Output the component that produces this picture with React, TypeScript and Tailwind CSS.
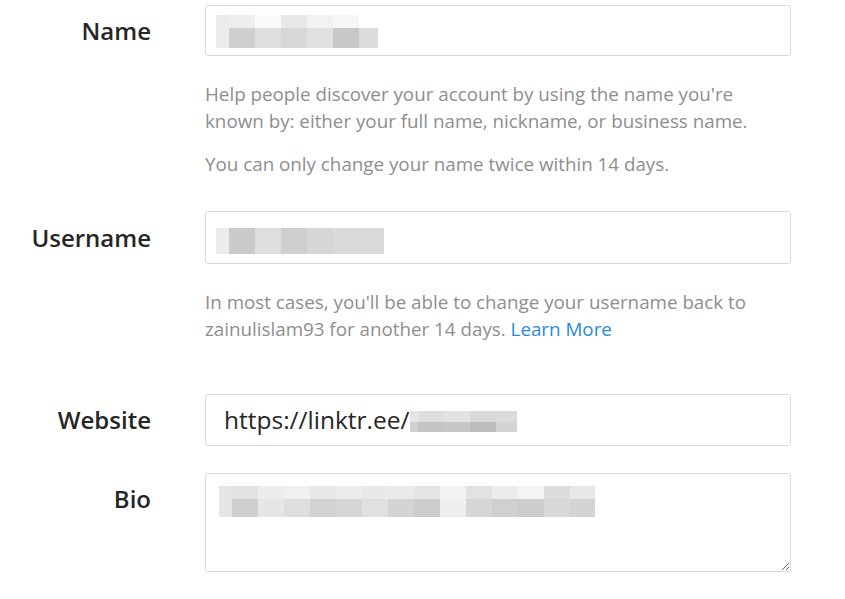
const nameCells = [
  ["#ececec", "#ececec", 13],
  ["#eeeeee", "#cfcfcf", 26],
  ["#fafafa", "#dedede", 26],
  ["#e8e8e8", "#d8d8d8", 26],
  ["#f2f2f2", "#e0e0e0", 26],
  ["#f7f7f7", "#c8c8c8", 26],
  ["#ffffff", "#dcdcdc", 19],
] as const;

const userCells = [
  ["#ececec", "#ececec", 13],
  ["#cbcbcb", "#cbcbcb", 26],
  ["#dedede", "#dedede", 26],
  ["#cfcfcf", "#cfcfcf", 26],
  ["#d6d6d6", "#d6d6d6", 26],
  ["#dadada", "#dadada", 51],
] as const;

const siteCells = [
  ["#e4e4e4", "#d0d0d0", 8],
  ["#dedede", "#c4c4c4", 26],
  ["#e2e2e2", "#c6c6c6", 26],
  ["#d8d8d8", "#bcbcbc", 26],
  ["#dadada", "#d4d4d4", 21],
] as const;

const bioCells = [
  ["#e6e6e6", "#e6e6e6", 13],
  ["#e2e2e2", "#cfcfcf", 26],
  ["#ececec", "#e6e6e6", 26],
  ["#f0f0f0", "#dedede", 26],
  ["#e8e8e8", "#d2d2d2", 26],
  ["#ececec", "#d6d6d6", 26],
  ["#e8e8e8", "#e0e0e0", 26],
  ["#eaeaea", "#d4d4d4", 26],
  ["#e4e4e4", "#cccccc", 26],
  ["#f2f2f2", "#eeeeee", 26],
  ["#e2e2e2", "#d6d6d6", 26],
  ["#ececec", "#d0d0d0", 26],
  ["#f4f4f4", "#cdcdcd", 26],
  ["#dddddd", "#d8d8d8", 26],
  ["#e8e8e8", "#d4d4d4", 25],
] as const;

function Mosaic({
  cells,
  top,
  bottom,
}: {
  cells: readonly (readonly [string, string, number])[];
  top: number;
  bottom: number;
}) {
  return (
    <div className="flex">
      {cells.map(([a, b, w], i) => (
        <div key={i} className="flex flex-col" style={{ width: w }}>
          <div style={{ height: top, background: a }} />
          <div style={{ height: bottom, background: b }} />
        </div>
      ))}
    </div>
  );
}

export default function App() {
  return (
    <div
      className="w-[845px] h-[599px] bg-white overflow-hidden pt-[5px]"
      style={{ fontFamily: '"Open Sans", "Noto Sans", sans-serif' }}
    >
      <div className="grid grid-cols-[151px_586px] gap-x-[54px]">
        {/* Name */}
        <div className="flex justify-end items-center text-[24px] font-semibold text-[#262626]">
          Name
        </div>
        <div className="h-[51px] border border-[#dbdbdb] rounded-[3px] pl-[10px] pt-[9px]">
          <Mosaic cells={nameCells} top={13} bottom={20} />
        </div>

        <div className="col-start-2 mt-[25px] text-[18.8px] leading-[27px] text-[#8e8e8e] whitespace-nowrap">
          <p>
            Help people discover your account by using the name you're
            <br />
            known by: either your full name, nickname, or business name.
          </p>
          <p className="mt-[16px]">You can only change your name twice within 14 days.</p>
        </div>

        {/* Username */}
        <div className="mt-[33px] flex justify-end items-center text-[24px] font-semibold text-[#262626]">
          Username
        </div>
        <div className="mt-[33px] h-[53px] border border-[#dbdbdb] rounded-[3px] pl-[10px] pt-[16px]">
          <Mosaic cells={userCells} top={13} bottom={13} />
        </div>

        <div className="col-start-2 mt-[25px] text-[18.8px] leading-[27px] text-[#8e8e8e] whitespace-nowrap">
          <p>In most cases, you'll be able to change your username back to</p>
          <p>
            zainulislam93 for another 14 days.{" "}
            <a className="text-[#2a8ad8]">Learn More</a>
          </p>
        </div>

        {/* Website */}
        <div className="mt-[51px] flex justify-end items-center text-[24px] font-semibold text-[#262626]">
          Website
        </div>
        <div className="mt-[51px] h-[52px] border border-[#dbdbdb] rounded-[3px] pl-[18px] flex items-center text-[24.5px] text-[#262626]">
          <span>https://linktr.ee/</span>
          <div className="mt-[2px]">
            <Mosaic cells={siteCells} top={11} bottom={10} />
          </div>
        </div>

        {/* Bio */}
        <div className="mt-[27px] flex justify-end items-start pt-[8px] text-[24px] font-semibold text-[#262626]">
          Bio
        </div>
        <div className="mt-[27px] relative">
          <textarea
            className="block w-full h-[99px] border border-[#dbdbdb] rounded-[3px] resize-y outline-none"
            defaultValue=""
          />
          <div className="absolute left-[14px] top-[13px]">
            <Mosaic cells={bioCells} top={13} bottom={18} />
          </div>
        </div>
      </div>
    </div>
  );
}
